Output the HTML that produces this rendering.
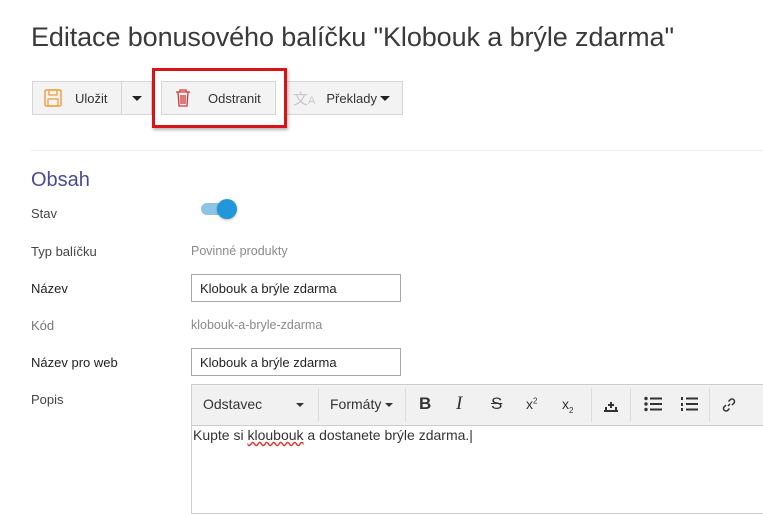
<!DOCTYPE html>
<html><head><meta charset="utf-8"><style>
*{box-sizing:border-box;margin:0;padding:0}
body{width:763px;height:502px;overflow:hidden;background:#fff;font-family:"Liberation Sans",sans-serif;color:#333;position:relative}
.a{position:absolute}
h1{position:absolute;left:31px;top:22px;font-size:27px;font-weight:normal;color:#3a3a3a;letter-spacing:-0.1px}
.btn{position:absolute;top:81px;height:34px;border:1px solid #d6d6d6;background:#f3f3f3;font-size:13px;color:#333;display:flex;align-items:center}
.lbl{position:absolute;left:31px;font-size:13px;color:#444}
.val{position:absolute;left:191px;font-size:12.5px;color:#8a8a8a}
.inp{position:absolute;left:191px;width:210px;height:28px;border:1px solid #a9a9a9;font-size:13px;padding:6px 0 0 8px;color:#222}
.tb{font-size:14px;color:#333;position:absolute;top:396px}
.sep{position:absolute;top:388px;width:1px;height:34px;background:#ddd}
</style></head><body>
<h1>Editace bonusového balíčku "Klobouk a brýle zdarma"</h1>
<div class="btn" style="left:32px;width:90px;padding-left:10px">
<svg width="20" height="20" viewBox="0 0 20 20"><rect x="2" y="2" width="16" height="16" rx="1.5" fill="none" stroke="#f0a040" stroke-width="1.5"/><rect x="6" y="2" width="8" height="5" fill="none" stroke="#f0a040" stroke-width="1.3"/><rect x="5" y="11" width="10" height="7" fill="none" stroke="#f0a040" stroke-width="1.3"/></svg>
<span style="margin-left:12px">Uložit</span></div>
<div class="btn" style="left:121px;width:31px;justify-content:center"><span style="border-left:5px solid transparent;border-right:5px solid transparent;border-top:5px solid #222"></span></div>
<div class="btn" style="left:161px;width:115px;padding-left:13px">
<svg width="16" height="20" viewBox="0 0 16 20"><path d="M1 4h14M5 4V2h6v2M3 4l1 14h8l1-14M6 7v9M8 7v9M10 7v9" fill="none" stroke="#d03a3a" stroke-width="1.3"/></svg>
<span style="margin-left:17px">Odstranit</span></div>
<div class="btn" style="left:285px;width:118px;padding-left:7px">
<span style="color:#c8c8c8;font-size:15px">文<small style="font-size:11px">A</small></span>
<span style="margin-left:11px">Překlady</span><span style="margin-left:3px;border-left:5px solid transparent;border-right:5px solid transparent;border-top:5px solid #222"></span></div>
<div class="a" style="left:152px;top:68px;width:135px;height:60px;border:3px solid #d8141a;box-shadow:1px 2px 3px rgba(0,0,0,.3)"></div>
<div class="a" style="left:31px;top:150px;width:732px;height:1px;background:#eee"></div>
<div class="a" style="left:31px;top:169px;font-size:20px;color:#4b4a94">Obsah</div>
<div class="lbl" style="top:206px">Stav</div>
<div class="a" style="left:201px;top:203px;width:30px;height:12px;border-radius:6px;background:#8cc4e6"></div>
<div class="a" style="left:217px;top:199px;width:20px;height:20px;border-radius:50%;background:#2196db;box-shadow:0 1px 2px rgba(0,0,0,.3)"></div>
<div class="lbl" style="top:244px">Typ balíčku</div><div class="val" style="top:244px">Povinné produkty</div>
<div class="lbl" style="top:281px;color:#222">Název</div><div class="inp" style="top:274px">Klobouk a brýle zdarma</div>
<div class="lbl" style="top:318px;color:#777">Kód</div><div class="val" style="top:318px">klobouk-a-bryle-zdarma</div>
<div class="lbl" style="top:355px;color:#222">Název pro web</div><div class="inp" style="top:348px">Klobouk a brýle zdarma</div>
<div class="lbl" style="top:392px">Popis</div>
<div class="a" style="left:191px;top:384px;width:580px;height:130px;border:1px solid #ccc"></div>
<div class="a" style="left:192px;top:385px;width:580px;height:41px;background:#f1f1f1;border-bottom:1px solid #ccc"></div>
<div class="tb" style="left:203px">Odstavec</div>
<div class="a" style="left:296px;top:403px;border-left:4px solid transparent;border-right:4px solid transparent;border-top:4px solid #333"></div>
<div class="sep" style="left:318px"></div>
<div class="tb" style="left:330px">Formáty</div>
<div class="a" style="left:385px;top:403px;border-left:4px solid transparent;border-right:4px solid transparent;border-top:4px solid #333"></div>
<div class="sep" style="left:405px"></div>
<div class="tb" style="left:419px;font-weight:bold;font-size:17px;top:394px">B</div>
<div class="tb" style="left:456px;font-style:italic;font-family:'Liberation Serif',serif;font-size:19px;top:393px">I</div>
<div class="tb" style="left:491px;font-size:17px;top:394px;text-decoration:line-through">S</div>
<div class="tb" style="left:526px">x<sup style="font-size:8px">2</sup></div>
<div class="tb" style="left:562px">x<sub style="font-size:8px">2</sub></div>
<div class="sep" style="left:591px"></div>
<svg class="a" style="left:603px;top:397px" width="16" height="16" viewBox="0 0 16 16"><path d="M1 14h14M3 14v-4M13 14v-4M8 5v6M5 8h6" stroke="#333" stroke-width="2" fill="none"/></svg>
<div class="sep" style="left:630px"></div>
<svg class="a" style="left:644px;top:396px" width="18" height="16" viewBox="0 0 18 16"><g fill="#333"><circle cx="2" cy="2.5" r="1.7"/><circle cx="2" cy="8" r="1.7"/><circle cx="2" cy="13.5" r="1.7"/><rect x="6" y="1.5" width="12" height="2"/><rect x="6" y="7" width="12" height="2"/><rect x="6" y="12.5" width="12" height="2"/></g></svg>
<svg class="a" style="left:680px;top:396px" width="18" height="16" viewBox="0 0 18 16"><g fill="#333"><rect x="1" y="1" width="2" height="3"/><rect x="1" y="7" width="2" height="3"/><rect x="1" y="12" width="2" height="3"/><rect x="6" y="1.5" width="12" height="2"/><rect x="6" y="7" width="12" height="2"/><rect x="6" y="12.5" width="12" height="2"/></g></svg>
<div class="sep" style="left:709px"></div>
<svg class="a" style="left:721px;top:397px" width="16" height="16" viewBox="0 0 16 16"><path d="M7 9l2-2M5 8l-2 2a2.5 2.5 0 0 0 3.5 3.5l2-2M11 8l2-2a2.5 2.5 0 0 0-3.5-3.5l-2 2" stroke="#333" stroke-width="1.5" fill="none"/></svg>
<div class="a" style="left:193px;top:427px;font-size:14px;color:#333">Kupte si <span style="text-decoration:underline wavy #d33">kloubouk</span> a dostanete brýle zdarma.|</div>
</body></html>
